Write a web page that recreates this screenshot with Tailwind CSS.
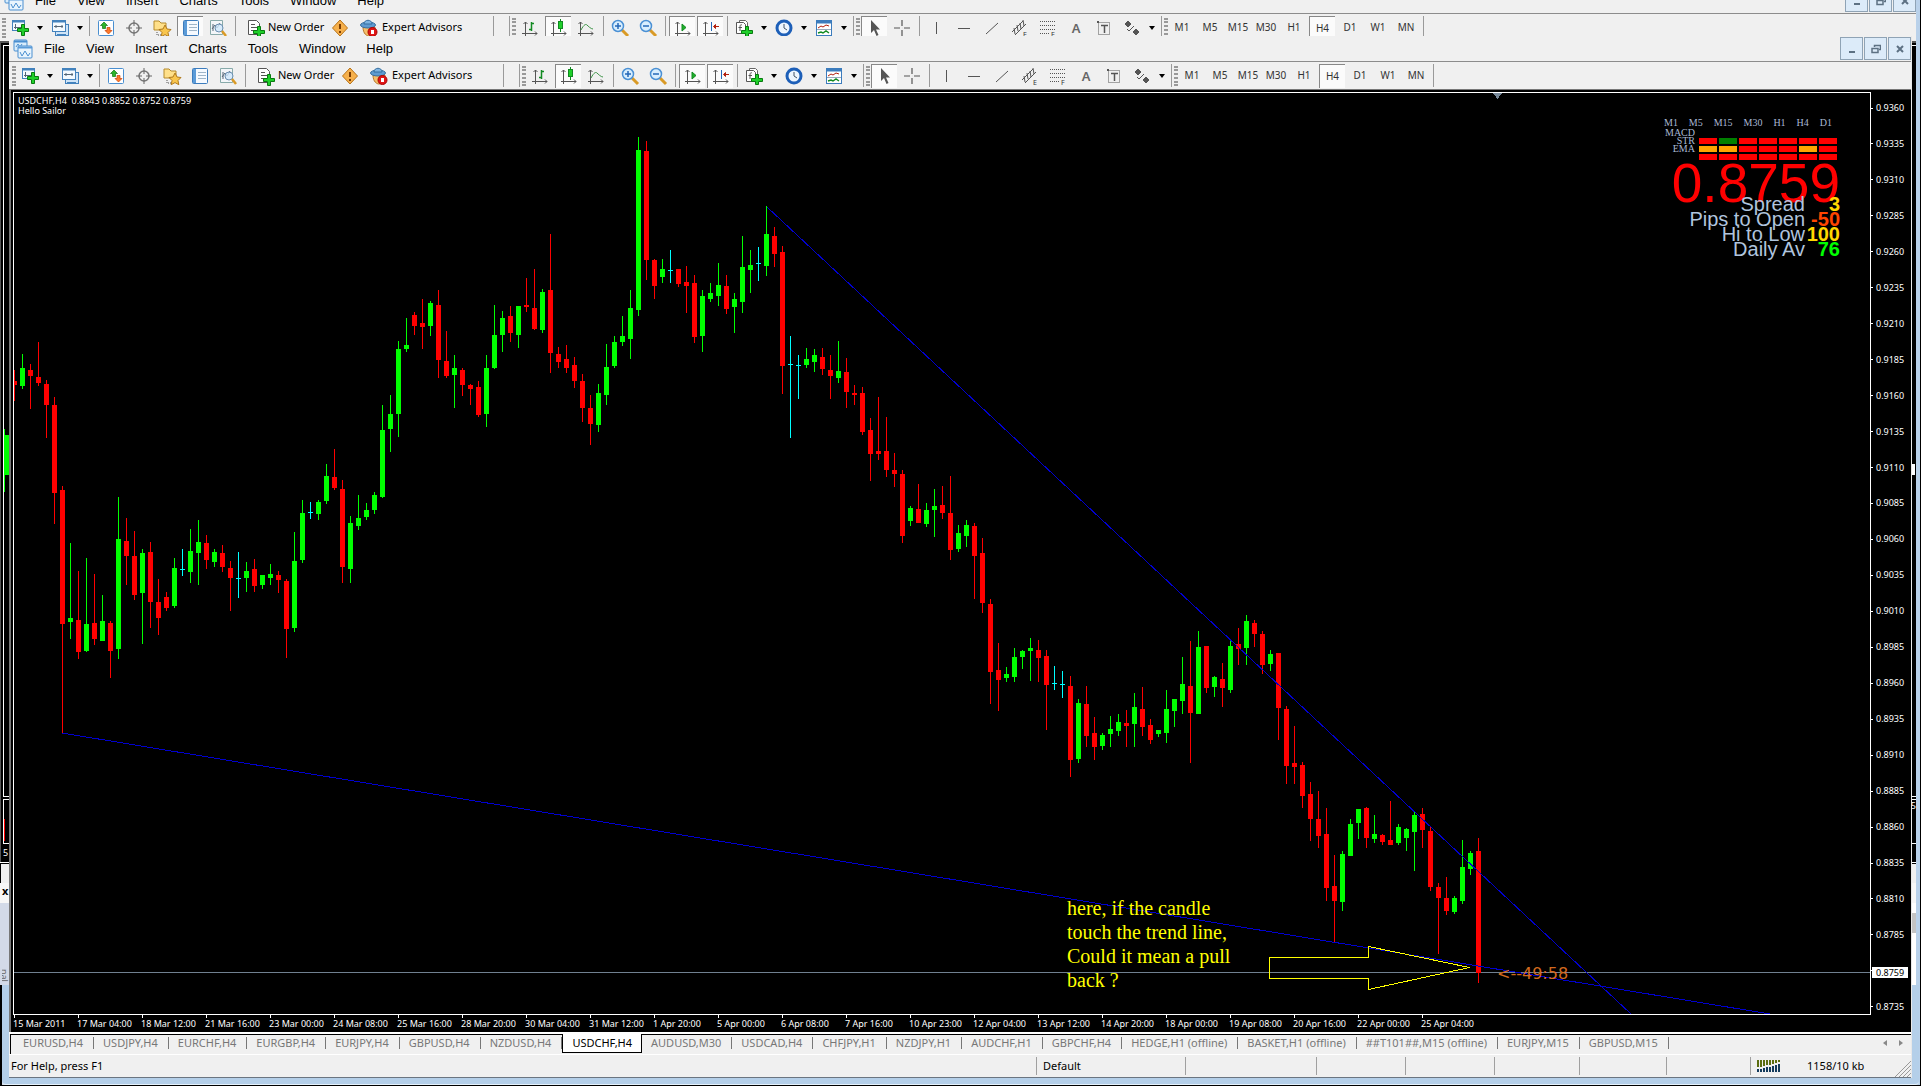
<!DOCTYPE html>
<html lang="en">
<head>
  <meta charset="UTF-8" />
  <title>USDCHF,H4</title>
  <script src="https://cdn.jsdelivr.net/npm/@tailwindcss/browser@4"></script>
</head>
<body class="relative h-screen overflow-hidden bg-black font-['Noto_Sans',sans-serif] text-[11px] text-black">

  <!-- window behind -->
  <div class="mr-px flex h-full flex-col border-r-4 border-[#b9d1ea] bg-[#f0f0f0]">
    <div data-menu="back" class="flex h-[13px] shrink-0 items-end justify-between overflow-hidden"></div>
    <div data-toolbar="back" class="flex h-7 shrink-0 items-center border-t border-[#8c8c8c] pl-0.5"></div>
    <div class="relative flex-1 overflow-hidden border-t-2 border-l border-[#555] bg-black text-white">
      <div class="absolute top-0.5 bottom-[65px] left-0.5 w-full border border-white"></div>
      <div class="absolute bottom-[18px] left-0.5 h-[45px] w-full border border-white"></div>
      <div class="absolute top-[386px] left-[3px] h-[63px] w-px bg-[#00ff00]"></div>
      <div class="absolute top-[392px] left-[3px] h-10 w-2 bg-[#00ff00]"></div>
      <div class="absolute bottom-[21px] left-[3px] h-[22px] w-px bg-[#ff0000]"></div>
      <span class="absolute bottom-[3px] left-0.5 text-[9px] leading-3">5</span>
      <div class="absolute top-[421px] right-px h-[11px] w-[3px] bg-white"></div>
      <span class="absolute right-0 bottom-[50px] text-[9px] leading-3">75</span>
    </div>
    <div class="h-[224px] shrink-0 border-t border-white bg-[#d3dae8]">
      <div class="h-5 border-t border-l border-black bg-[#f0f0f0]"></div>
      <div class="h-5 bg-[#f7f7f7] pl-0.5 text-[11px] leading-4 font-bold">x</div>
      <div class="ml-auto h-[83px] w-1 bg-white pt-2.5"><div class="h-5 bg-[#c4c4c4]"></div></div>
    </div>
  </div>
  <span class="absolute bottom-[101px] left-0.5 h-4 w-2 overflow-hidden text-[9px] leading-3 text-[#666] [writing-mode:vertical-rl]">nal</span>

  <!-- frame of the front window -->
  <div class="absolute right-0.5 bottom-px left-0.5 h-[100px] rounded-b border-b border-[#e6f2fc] bg-[#b4cfe9]"></div>
  <div class="absolute bottom-0 left-0 h-[101px] w-0.5 bg-black"></div>
  <div class="absolute right-0 bottom-0 left-0 h-px bg-black"></div>

  <!-- front window -->
  <div class="absolute top-9 right-[9px] bottom-2 left-[9px] flex flex-col border-r border-[#e8e8e8] bg-[#f0f0f0]">
    <div data-menu="front" class="flex h-[25px] shrink-0 items-end justify-between"></div>
    <div data-toolbar="front" class="flex h-7 shrink-0 items-center border-t border-[#8c8c8c] pl-[3px]"></div>

    <main class="flex min-h-0 flex-1 flex-col border-t border-l-2 border-[#777] bg-black pt-0.5 pl-0.5 text-[9px] text-white">
      <div class="flex min-h-0 flex-1">
        <div class="relative min-w-0 flex-1 overflow-hidden border border-white">
          <svg id="chart" class="absolute inset-0 h-full w-full" shape-rendering="crispEdges"></svg>
          <div class="absolute top-[3px] left-1 leading-[10px]">
            <p class="whitespace-pre">USDCHF,H4  0.8843 0.8852 0.8752 0.8759</p>
            <p>Hello Sailor</p>
          </div>

          <!-- indicator panel -->
          <div class="absolute top-6 right-[30px] w-[176px] font-['Liberation_Serif',serif] text-[10px] text-[#a9b8d4]">
            <div class="flex justify-between pr-2 leading-3">
              <span>M1</span><span>M5</span><span>M15</span><span>M30</span><span>H1</span><span>H4</span><span>D1</span>
            </div>
            <div class="flex justify-end gap-1">
              <div class="text-right leading-2">
                <p>MACD</p><p>STR</p><p>EMA</p>
              </div>
              <div id="signals" class="mt-[9px] grid h-[31px] grid-cols-7 content-start gap-0.5 pr-[3px]"></div>
            </div>
            <p class="text-right font-['Liberation_Sans',sans-serif] text-[55px] leading-7 text-[#ff0000]">0.8759</p>
            <dl class="grid grid-cols-[1fr_35px] text-right font-['Liberation_Sans',sans-serif] text-xl leading-[15px] whitespace-nowrap text-[#b0c4de]">
              <dt>Spread</dt><dd class="font-bold text-[#ffd700]">3</dd>
              <dt>Pips to Open</dt><dd class="font-bold text-[#ff4500]">-50</dd>
              <dt>Hi to Low</dt><dd class="font-bold text-[#ffd700]">100</dd>
              <dt>Daily Av</dt><dd class="font-bold text-[#00ff00]">76</dd>
            </dl>
          </div>
        </div>
        <div id="prices" class="relative flex w-10 shrink-0 flex-col justify-between pt-2.5 pb-0.5 leading-3">
          <span class="absolute right-[3px] bottom-[37px] w-9 bg-white pl-1 leading-[11px] text-black">0.8759</span>
        </div>
      </div>
      <div id="dates" class="flex h-[17px] shrink-0 overflow-hidden"></div>
    </main>

    <nav class="flex h-[22px] shrink-0 items-stretch border-t-2 border-white">
      <div id="tabs" class="ml-px flex flex-1 border-t border-l border-black pl-[3px]"></div>
      <div class="flex items-center gap-3 border-t border-black pr-2 pb-1 text-[#888]">
        <button aria-label="Previous tabs"><svg width="4" height="6"><path d="M4 0v6L0 3z" fill="currentColor" /></svg></button>
        <button aria-label="Next tabs"><svg width="4" height="6"><path d="M0 0v6l4-3z" fill="currentColor" /></svg></button>
      </div>
    </nav>
    <footer class="flex h-6 shrink-0 items-stretch border-t border-b border-t-white border-b-[#6b7580] leading-[22px]">
      <div class="flex-1 pl-0.5">For Help, press F1</div>
      <div class="my-0.5 w-[149px] border-l border-[#a0a0a0] pl-1.5 leading-[18px]">Default</div>
      <div class="my-0.5 w-[131px] border-l border-[#a0a0a0]"></div>
      <div class="my-0.5 w-[89px] border-l border-[#a0a0a0]"></div>
      <div class="my-0.5 w-[89px] border-l border-[#a0a0a0]"></div>
      <div class="my-0.5 w-[85px] border-l border-[#a0a0a0]"></div>
      <div class="my-0.5 w-[87px] border-l border-[#a0a0a0]"></div>
      <div class="my-0.5 w-[84px] border-l border-[#a0a0a0]"></div>
      <div class="relative my-0.5 flex w-[161px] items-center border-l border-[#a0a0a0] pl-1.5">
        <svg width="24" height="12" shape-rendering="crispEdges">
          <path d="M1 0v7M4 0v7M7 0v6M10 0v5M13 0v5M16 0v4M19 0v3M22 0v2" stroke="#5b6d10" stroke-width="2" />
          <path d="M1 9v3M4 9v3M7 8v4M10 7v5M13 7v5M16 6v6M19 5v7M22 4v8" stroke="#123a5c" stroke-width="2" />
        </svg>
        <span class="ml-[26px]">1158/10 kb</span>
        <svg class="absolute right-0 -bottom-0.5" width="16" height="16" stroke="#999"><path d="M0 16L16 0M4 16L16 4M8 16l8-8M12 16l4-4" /></svg>
      </div>
    </footer>
  </div>

  <script>
    const icons = {
      app: `<rect x="1" y="1" width="13" height="11" rx="1" fill="#d8ecfb" stroke="#4a8fd0"/><path d="M1 2.500h13" stroke="#4a8fd0" stroke-width="2"/><path d="M3 8l2-3 2 3 2-3" fill="none" stroke="#4a8fd0"/><rect x="5" y="7" width="14" height="12" rx="1" fill="#e8f4fd" stroke="#4a8fd0"/><path d="M5 8.500h14" stroke="#5a9bd8" stroke-width="2"/><path d="M7 13l2 4 3-5 3 5 2-3" fill="none" stroke="#4a8fd0"/>`,
      newChart: `<rect x="1.500" y="1.500" width="12" height="10" fill="#f4faff" stroke="#4382bd"/><path d="M1 2.500h13" stroke="#4382bd" stroke-width="2"/><path d="M4.500 5v5M3 8.500h8" stroke="#567"/><path d="M10.500 5.500h3v4h4v3h-4v4h-3v-4h-4v-3h4z" fill="#1fd02a" stroke="#087a10"/>`,
      profiles: `<rect x="4.500" y="5.500" width="13" height="11" fill="#cfe4f7" stroke="#4382bd"/><rect x="1.500" y="1.500" width="13" height="11" fill="#f4faff" stroke="#4382bd"/><path d="M1 2.500h14" stroke="#4382bd" stroke-width="2"/><path d="M3 7.500h9M5 6v3M11 6v3" stroke="#567"/><path d="M6 15.500h9" stroke="#4382bd"/>`,
      market: `<rect x="1.500" y="1.500" width="15" height="15" rx="1" fill="#fff" stroke="#4a8fd0"/><path d="M7 3l3.500 3.500H8.500v3h-3v-3h-2z" fill="#2bb52b" stroke="#137513" stroke-width=".7"/><path d="M11.500 15L8 11.500h2v-3h3v3h2z" fill="#ff7a2a" stroke="#c8420a" stroke-width=".7"/>`,
      dataWindow: `<circle cx="9" cy="9" r="5" fill="none" stroke="#777" stroke-width="1.500"/><path d="M9 1v6M9 11v6M1 9h6M11 9h6" stroke="#666"/>`,
      navigator: `<path d="M1 2h5l2 2h5v7H1z" fill="#ffe08a" stroke="#b58a2c"/><path d="M4 13v3h4" fill="none" stroke="#555" stroke-dasharray="1 1"/><path d="M12 6l2 4 4 .5-3 3 .8 4.200L12 15.600l-3.800 2.100.8-4.200-3-3 4-.5z" fill="#f9c64e" stroke="#b17a1c"/>`,
      terminal: `<rect x="1.500" y="1.500" width="15" height="15" rx="1" fill="#f6faff" stroke="#3c7cbd"/><rect x="2" y="2" width="3" height="14" fill="#5b9bd8"/><path d="M7 5.500h8M7 8.500h8M7 11.500h8" stroke="#9fb5c8"/>`,
      tester: `<path d="M1.500 1.500h12v14h-12z" fill="#f3f6f9" stroke="#8aa"/><path d="M4 12V5M3 10l3-4 2 3 3-5" fill="none" stroke="#567"/><circle cx="10" cy="9" r="4" fill="#cfe8fb" fill-opacity=".8" stroke="#6b8fb0"/><path d="M13 12l4 5" stroke="#d99a26" stroke-width="2.500"/>`,
      order: `<path d="M2.500 1.500h8l3 3v11h-11z" fill="#fff" stroke="#555"/><path d="M5 5.500h4M5 8.500h6M5 11.500h4" stroke="#555"/><path d="M11.500 7.500h3v4h4v3h-4v4h-3v-4h-4v-3h4z" fill="#1fd02a" stroke="#087a10"/>`,
      meta: `<path d="M9 1l7.500 8L9 17 1.500 9z" fill="#f6b04c" stroke="#b8741a"/><path d="M9 5v5M9 12v2" stroke="#7a3d05" stroke-width="2"/>`,
      expert: `<path d="M3 8c0 7 4 9 6 9s6-2 6-9z" fill="#f5bf6a" stroke="#b5762a"/><ellipse cx="8" cy="6" rx="7.500" ry="3" fill="#5e9bd0" stroke="#356e9f"/><path d="M4 5c0-5 8-5 8 0z" fill="#7db3e0" stroke="#356e9f"/><circle cx="12.500" cy="13" r="4.500" fill="#e01616" stroke="#a00"/><rect x="11" y="11" width="3" height="4" fill="#fff"/>`,
      bars: `<path d="M4.500 3v14M1 14.500h15M2.500 5l2-2 2 2M14 12.500l2 2-2 2" fill="none" stroke="#555"/><path d="M10.500 3v9M8 10.500h2.500M10.500 4.500H13" stroke="#128a22" stroke-width="1.500" fill="none"/>`,
      candles: `<path d="M3.500 3v14M1 14.500h15M1.500 5l2-2 2 2M14 12.500l2 2-2 2" fill="none" stroke="#555"/><path d="M10.500 0v13" stroke="#128a22"/><rect x="8.500" y="2.500" width="4" height="7" fill="#1fd02a" stroke="#128a22"/>`,
      line: `<path d="M3.500 3v14M1 14.500h15M1.500 5l2-2 2 2M14 12.500l2 2-2 2" fill="none" stroke="#555"/><path d="M4 11c3-6 5-6 6-5s4 4 6 4" fill="none" stroke="#3c9346"/>`,
      zoomIn: `<path d="M11 11l6 6" stroke="#d99a26" stroke-width="3"/><circle cx="7" cy="7" r="5.500" fill="#d8eefe" stroke="#4a90d4" stroke-width="1.500"/><path d="M7 4v6M4 7h6" stroke="#2468b8" stroke-width="1.500"/>`,
      zoomOut: `<path d="M11 11l6 6" stroke="#d99a26" stroke-width="3"/><circle cx="7" cy="7" r="5.500" fill="#d8eefe" stroke="#4a90d4" stroke-width="1.500"/><path d="M4 7h6" stroke="#2468b8" stroke-width="1.500"/>`,
      scroll: `<path d="M3.500 3v14M1 14.500h15M1.500 5l2-2 2 2M14 12.500l2 2-2 2" fill="none" stroke="#555"/><path d="M8 5v7l4-3.500z" fill="#1fb02a" stroke="#128a22"/>`,
      shift: `<path d="M3.500 3v14M1 14.500h15M1.500 5l2-2 2 2M14 12.500l2 2-2 2" fill="none" stroke="#555"/><path d="M9.500 3v9" stroke="#2468b8"/><path d="M17 7.500h-3M11.500 7.500l2-2v4z" fill="#b3200e" stroke="#b3200e"/>`,
      indicator: `<path d="M4.500 1.500h6l2 2v9h-8z" fill="#fff" stroke="#666"/><path d="M1.500 3.500h7l2 2v9h-9z" fill="#fff" stroke="#555"/><path d="M7 6c-2-1-2 1-2 3v3M3.500 8.500H7" fill="none" stroke="#555"/><path d="M10.500 7.500h3v4h4v3h-4v3h-3v-3h-4v-3h4z" fill="#1fd02a" stroke="#087a10"/>`,
      clock: `<circle cx="9" cy="9" r="7" fill="#eef6ff" stroke="#1d5fb8" stroke-width="3"/><path d="M9 5v4l3 2" fill="none" stroke="#456"/>`,
      template: `<rect x="1.500" y="1.500" width="15" height="15" fill="#fff" stroke="#3c7cbd"/><path d="M1 3h16" stroke="#3c7cbd" stroke-width="3"/><path d="M3 9l3-2 2 1 3-2 3 1" fill="none" stroke="#b3200e"/><path d="M2 10.500h14" stroke="#9ab"/><path d="M3 14l3-1 2 1 3-2 3 2" fill="none" stroke="#128a22" stroke-width="1.500"/>`,
      cursor: `<path d="M5 1v13l3-3 2.500 6 2-1L10 10.500h4z" fill="#555"/>`,
      cross: `<path d="M9 1v6M9 11v6M1 9h6M11 9h6M9 9h.1" stroke="#555" stroke-width="1.200"/>`,
      vline: `<path d="M9.500 3v12" stroke="#555"/>`,
      hline: `<path d="M3 9.500h12" stroke="#555"/>`,
      trend: `<path d="M3 15L15 4" stroke="#555"/>`,
      channel: `<path d="M1 13L12 2M4 16L15 5M3 9l1 6M6 6l1 6M9 4l1 6M12 1l1 6" stroke="#555"/><text x="12" y="18" font-size="7" fill="#333">E</text>`,
      fibo: `<path d="M1 2.500h15M1 6.500h15M1 10.500h15M1 14.500h10" stroke="#555" stroke-dasharray="1 1"/><text x="12" y="18" font-size="7" fill="#333">F</text>`,
      text: `<text x="9" y="14" font-size="13" font-weight="600" text-anchor="middle" fill="#666">A</text>`,
      label: `<rect x="3.500" y="3.500" width="11" height="12" fill="none" stroke="#555" stroke-dasharray="1 1"/><path d="M6 6.500h7M9.500 6v8" stroke="#555" stroke-width="1.500"/><rect x="2" y="2" width="2" height="2" fill="#555"/>`,
      arrows: `<path d="M5 2l3 3-3 3-3-3zM13 10l3 3-3 3-3-3z" fill="#555" stroke="#555"/><path d="M4 10l2 2 5-5" fill="none" stroke="#555"/>`,
    };

    const svg = (name, size = 18) =>
      `<svg width="${size}" height="${size}" viewBox="0 0 ${size} ${size}" class="shrink-0 overflow-visible">${icons[name]}</svg>`;

    // | separator, : grip, v drop-down arrow, _ gap
    const tools = "newChart v profiles v | market dataWindow navigator terminal tester | order meta expert __ | _ | : bars candles line | zoomIn zoomOut | scroll shift | indicator v clock v template v | : cursor cross | vline hline trend channel fibo text label arrows v | :".split(" ");
    const frames = ["M1", "M5", "M15", "M30", "H1", "H4", "D1", "W1", "MN"];
    const pressed = ["candles", "scroll", "shift", "cursor", "H4"];
    const captions = { order: "New Order", expert: "Expert Advisors" };
    const sep = `<span class="flex h-full w-1.5 shrink-0 justify-center py-0.5"><i class="w-px bg-[#9a9a9a]"></i></span>`;
    const grip = `<span class="h-5 w-1 shrink-0 border-x-2 border-dotted border-[#999]"></span>`;

    function button(name, content, down) {
      return down
        ? `<button aria-label="${name}" class="mx-px flex h-6 w-[26px] shrink-0 items-center justify-center border-t border-l border-[#888] bg-[#fbfbfb]">${content}</button>`
        : `<button aria-label="${name}" class="flex h-6 w-7 shrink-0 items-center justify-center">${content}</button>`;
    }

    function toolbar(kind) {
      const down = kind === "back" ? [...pressed, "terminal"] : pressed;
      let html = grip;
      for (const t of tools) {
        if (t === "|") html += sep;
        else if (t === ":") html += grip;
        else if (t === "_") html += `<span class="w-2.5 shrink-0"></span>`;
        else if (t === "__") html += `<span class="w-6 shrink-0"></span>`;
        else if (t === "v") html += `<button aria-label="More" class="flex w-3 shrink-0 justify-center"><svg width="6" height="4"><path d="M0 0h6L3 4z"/></svg></button>`;
        else if (t === "order") html += `<button class="flex w-[88px] shrink-0 items-center gap-1 pl-2 whitespace-nowrap">${svg(t)}${captions[t]}</button>`;
        else if (t === "expert") html += `<button class="flex w-28 shrink-0 items-center gap-1 pl-1.5 whitespace-nowrap">${svg(t)}${captions[t]}</button>`;
        else html += button(t, svg(t), down.includes(t));
      }
      for (const f of frames) {
        html += button(f, `<span class="text-[10px] text-[#333]">${f}</span>`, down.includes(f));
      }
      return html + sep;
    }

    function menu(kind) {
      const items = ["File", "View", "Insert", "Charts", "Tools", "Window", "Help"]
        .map((m) => `<button class="px-2.5">${m}</button>`).join("");
      const box = (label, path) =>
        `<button aria-label="${label}" class="flex h-[23px] w-[23px] items-center justify-center border border-[#8fa3b5] bg-[#dcebf9]"><svg width="10" height="10" fill="none" stroke="#5d7183" stroke-width="1.500">${path}</svg></button>`;
      return `
        <div class="flex h-[25px] items-center gap-px pl-1 font-['Liberation_Sans',sans-serif] text-[13px]">${svg("app", 20)}${items}</div>
        <div class="flex h-[25px] items-center gap-px">
          ${box("Minimize", `<path d="M2 8h6" stroke-width="2"/>`)}
          ${box("Restore", `<path d="M3.500 3V1.500h6v4H8M1 4.500h6v4H1z"/>`)}
          ${box("Close", `<path d="M2 2l6 6M8 2L2 8" stroke-width="2"/>`)}
        </div>`;
    }

    document.querySelectorAll("[data-menu]").forEach((e) => (e.innerHTML = menu(e.dataset.menu)));
    document.querySelectorAll("[data-toolbar]").forEach((e) => (e.innerHTML = toolbar(e.dataset.toolbar)));

    // colour, high, body top, body bottom, low
    const candles = `
r370,381,385,401 g354,368,386,389 r364,370,376,409 r342,377,383,386 r380,384,405,438 r397,405,493,524 r486,490,624,734 g543,618,622,639
r571,620,652,659 g558,624,651,652 r574,623,639,645 g595,621,641,641 r621,623,651,678 g497,539,649,659 r518,541,556,585 r531,556,595,600
g549,553,593,644 r542,552,602,628 r579,602,618,635 r592,597,608,611 g558,568,606,608 c549,569,570,576 g529,551,572,583 g520,542,553,585
r535,543,560,569 g549,552,562,567 r545,553,567,572 r561,568,578,611 c552,578,579,598 g562,571,578,592 r559,569,586,592 g575,575,585,589
g564,574,578,585 r571,575,580,593 r579,581,629,658 g532,561,628,632 g500,513,560,563 c502,512,513,519 g500,502,514,520 g464,476,501,504
r449,477,488,490 r480,489,567,583 g516,523,569,583 g495,518,526,530 g503,510,517,520 g492,495,510,514 g405,430,497,498 g395,414,429,452
g341,349,414,437 g318,345,349,352 r312,315,326,335 r299,323,327,349 g301,303,326,336 r290,305,360,378 r331,361,376,378 g355,368,375,408
r368,370,385,396 r384,385,389,405 r381,387,415,417 g355,368,414,427 g305,335,368,369 g311,318,335,352 r306,316,333,342 g306,306,335,348
r278,305,307,312 r269,308,329,330 g289,292,330,333 r234,290,353,373 r347,354,362,368 r345,359,368,373 r357,365,381,388 r374,381,408,422
r395,408,424,445 g384,393,425,432 g344,367,395,405 g336,342,366,368 g316,336,342,346 g290,308,339,359 g137,150,310,316 r141,151,260,280
r259,260,286,299 g259,269,277,283 c250,270,271,283 r269,269,284,287 r266,282,286,313 r275,283,337,343 g290,296,336,352 g283,293,299,302
g263,285,296,306 r275,286,309,314 g293,299,307,333 g236,267,302,313 g250,265,270,293 c247,263,264,281 g206,234,266,276 r227,236,254,267
r246,252,366,394 c336,364,365,438 c355,365,366,399 g348,359,365,368 g349,355,362,372 r348,357,369,375 r355,370,376,399 g341,371,378,383
r358,372,392,408 r385,393,395,405 r387,393,432,435 r418,430,454,481 r397,451,454,460 r417,451,470,477 r453,470,474,487 r470,474,536,543
g506,508,521,526 r484,509,523,523 g503,510,524,527 g489,506,510,537 r486,505,513,519 r476,513,550,560 g525,533,549,552 g520,525,536,547
r523,526,556,599 r538,553,603,613 r599,604,672,704 r643,670,680,711 g667,674,678,682 g648,657,677,682 g650,651,657,669 g638,648,651,681
r640,650,658,682 r650,656,685,730 c666,683,684,690 c671,684,685,698 r676,686,760,777 g699,703,759,763 r686,704,736,747 r717,733,747,760
g733,735,746,750 g716,729,734,747 g714,722,731,736 r710,723,726,747 g693,707,724,747 r687,709,727,736 r719,725,740,744 g730,730,734,737
g690,709,733,743 g699,699,711,727 g657,684,701,714 r641,686,713,763 g631,647,714,714 r646,646,688,693 g676,677,687,697 r663,679,688,707
g640,646,690,693 r628,644,649,665 g615,621,648,665 r620,623,634,647 r631,634,665,674 g650,654,664,671 r653,653,708,740 r706,709,766,784
r726,763,767,784 r762,765,796,808 r782,794,819,841 r791,819,836,848 r808,834,888,901 r855,886,901,943 g851,854,902,911 g819,824,856,856
g809,809,823,839 r807,808,838,848 g815,834,839,843 r834,835,842,845 r801,840,845,845 g824,827,843,845 g828,829,838,851 g811,815,832,871
r808,814,830,848 r827,831,887,891 r883,887,898,954 r877,898,911,915 g896,898,912,914 g840,867,901,904 g851,853,869,875 r838,851,973,983`.trim().split(/\s+/);

    const top0 = 93; // screen y of the plot's first row
    const colors = { r: "#ff0000", g: "#00ff00", c: "#00ffff" };
    let marks = `
      <path d="M0 ${972.5 - top0}H4000" stroke="#708090"/>
      <path d="M1479 0h9l-4.500 6z" fill="#778899"/>`;
    candles.forEach((candle, i) => {
      const [high, top, bottom, low] = candle.slice(1).split(",").map((v) => v - top0);
      const x = i * 8;
      marks += `<path d="M${x} ${high}h1v${low - high}h-1zM${x - 2} ${top}h5v${bottom - top}h-5z" fill="${colors[candle[0]]}"/>`;
    });
    marks += `
      <path d="M48 640L1756 921M753 114L1617 921" stroke="#0000cd" fill="none"/>
      <path d="M1255.500 864.500h99v-11l101 21-101 22v-11h-99z" stroke="#ffff00" fill="none"/>
      <g font-family="Liberation Serif, serif" font-size="20" fill="#ffff00">
        <text x="1053" y="822">here, if the candle</text>
        <text x="1053" y="846">touch the trend line,</text>
        <text x="1053" y="870">Could it mean a pull</text>
        <text x="1053" y="894">back ?</text>
      </g>
      <text x="1483" y="886" font-family="DejaVu Sans, sans-serif" font-size="16" fill="#d2691e">&lt;--49:58</text>`;
    document.getElementById("chart").innerHTML = marks;

    const signalColors = { r: "bg-[#ff0000]", g: "bg-[#008000]", o: "bg-[#ffa500]" };
    document.getElementById("signals").innerHTML = [..."rgrrrrroorrrorrrrrrrr"]
      .map((c) => `<i class="h-1.5 w-[18px] ${signalColors[c]}"></i>`).join("");

    let prices = "";
    for (let p = 9360; p >= 8735; p -= 25) {
      prices += `<span class="flex items-center gap-[3px]"><i class="h-px w-0.5 bg-white"></i>0.${p}</span>`;
    }
    document.getElementById("prices").insertAdjacentHTML("afterbegin", prices);

    document.getElementById("dates").innerHTML = ["15 Mar 2011", "17 Mar 04:00", "18 Mar 12:00", "21 Mar 16:00", "23 Mar 00:00", "24 Mar 08:00", "25 Mar 16:00", "28 Mar 20:00", "30 Mar 04:00", "31 Mar 12:00", "1 Apr 20:00", "5 Apr 00:00", "6 Apr 08:00", "7 Apr 16:00", "10 Apr 23:00", "12 Apr 04:00", "13 Apr 12:00", "14 Apr 20:00", "18 Apr 00:00", "19 Apr 08:00", "20 Apr 16:00", "22 Apr 00:00", "25 Apr 04:00"]
      .map((d) => `<span class="w-16 shrink-0 whitespace-nowrap leading-3"><i class="ml-px block h-[3px] w-px bg-white"></i>${d}</span>`).join("");

    document.getElementById("tabs").innerHTML = ["EURUSD,H4", "USDJPY,H4", "EURCHF,H4", "EURGBP,H4", "EURJPY,H4", "GBPUSD,H4", "NZDUSD,H4", "USDCHF,H4", "AUDUSD,M30", "USDCAD,H4", "CHFJPY,H1", "NZDJPY,H1", "AUDCHF,H1", "GBPCHF,H4", "HEDGE,H1 (offline)", "BASKET,H1 (offline)", "##T101##,M15 (offline)", "EURJPY,M15", "GBPUSD,M15"]
      .map((t) => t === "USDCHF,H4"
        ? `<button class="-mt-px mb-px border-x border-b border-black bg-white px-[9px] leading-4">${t}</button>`
        : `<button class="flex items-start pl-[9px] leading-4 text-[#777]">${t}<i class="mt-0.5 ml-2.5 h-3 w-px bg-[#777]"></i></button>`).join("");
  </script>
</body>
</html>
